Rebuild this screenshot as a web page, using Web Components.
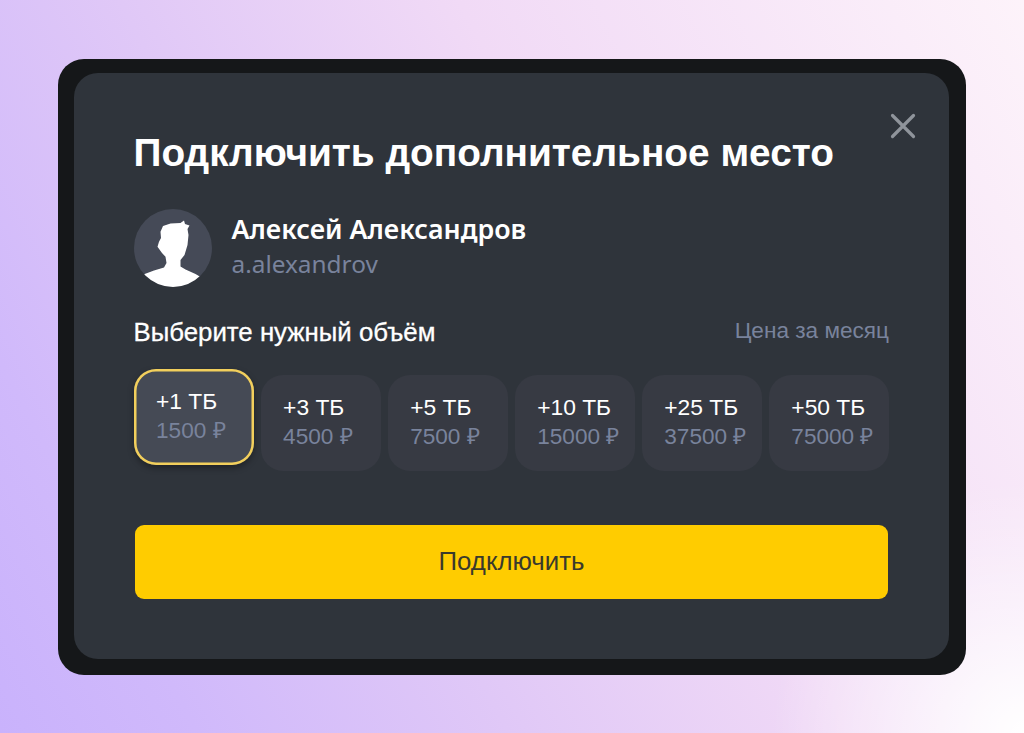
<!DOCTYPE html>
<html lang="ru">
<head>
<meta charset="utf-8">
<title>Подключить дополнительное место</title>
<style>
    html, body { height: 100%; margin: 0; }
    body {
        display: flex;
        align-items: center;
        justify-content: center;
        font-family: "Liberation Sans", Arial, sans-serif;
        background:
            radial-gradient(circle at 100% 100%, #fff 0, rgba(255,255,255,0) 20%),
            linear-gradient(62deg, #c9b2fc 0%, #d0b9fb 14%, #e0c8f7 36%, #f1daf6 60%, #fdf3fa 100%);
    }
</style>
</head>
<body>
<storage-dialog>
    <user-card slot="user" name="Алексей Александров" login="a.alexandrov"></user-card>
    <volume-tile label="+1 ТБ" price="1500 ₽" selected></volume-tile>
    <volume-tile label="+3 ТБ" price="4500 ₽"></volume-tile>
    <volume-tile label="+5 ТБ" price="7500 ₽"></volume-tile>
    <volume-tile label="+10 ТБ" price="15000 ₽"></volume-tile>
    <volume-tile label="+25 ТБ" price="37500 ₽"></volume-tile>
    <volume-tile label="+50 ТБ" price="75000 ₽"></volume-tile>
</storage-dialog>

<script>
    class StorageDialog extends HTMLElement {
        constructor() {
            super();
            this.attachShadow({ mode: 'open' });
            this.shadowRoot.innerHTML = `
                <style>
                    :host {
                        display: block;
                        width: 908px;
                        height: 616px;
                        box-sizing: border-box;
                        padding: 14px 17px 16px 16px;
                        background: #151719;
                        border-radius: 26px;
                    }
                    .panel {
                        position: relative;
                        box-sizing: border-box;
                        height: 100%;
                        padding: 58px 60px 0 60px;
                        background: #2f343b;
                        border-radius: 24px;
                        color: #fff;
                    }
                    h1 {
                        margin: 0 0 34px -0.5px;
                        font-size: 38.8px;
                        line-height: 44px;
                        font-weight: 700;
                        white-space: nowrap;
                    }
                    .close {
                        position: absolute;
                        top: 40px;
                        right: 33px;
                        width: 26px;
                        height: 26px;
                        display: block;
                    }
                    .head {
                        display: flex;
                        justify-content: space-between;
                        align-items: baseline;
                        margin-top: 31px;
                        height: 36px;
                    }
                    .head b {
                        font-weight: 400;
                        font-size: 25.8px;
                        margin-left: -0.5px;
                        -webkit-text-stroke: 0.3px #fff;
                    }
                    .head span {
                        font-size: 22.6px;
                        color: #79839c;
                        position: relative;
                        top: -3px;
                    }
                    .tiles {
                        display: grid;
                        grid-template-columns: repeat(6, 1fr);
                        gap: 7.4px;
                        margin-top: 21px;
                    }
                    .connect {
                        display: block;
                        box-sizing: border-box;
                        width: 753px;
                        height: 74px;
                        margin: 54px 0 0 1px;
                        border: none;
                        border-radius: 9px;
                        background: #ffcc00;
                        color: #3a3a2c;
                        font: 400 25.8px "Liberation Sans", Arial, sans-serif;
                    }
                </style>
                <div class="panel">
                    <svg class="close" viewBox="0 0 26 26" aria-hidden="true">
                        <path d="M2.5 2.5 23.5 23.5M23.5 2.5 2.5 23.5" stroke="#8f949b" stroke-width="3.2" stroke-linecap="round" fill="none"/>
                    </svg>
                    <h1>Подключить дополнительное место</h1>
                    <slot name="user"></slot>
                    <div class="head"><b>Выберите нужный объём</b><span>Цена за месяц</span></div>
                    <div class="tiles"><slot></slot></div>
                    <button class="connect" type="button">Подключить</button>
                </div>
            `;
        }
    }

    class UserCard extends HTMLElement {
        constructor() {
            super();
            this.attachShadow({ mode: 'open' });
        }

        connectedCallback() {
            this.shadowRoot.innerHTML = `
                <style>
                    :host {
                        display: flex;
                        align-items: center;
                        gap: 20px;
                        margin-left: -0.5px;
                    }
                    svg {
                        width: 78px;
                        height: 78px;
                        flex: none;
                        display: block;
                    }
                    .name {
                        font: 600 26.8px/36px "Noto Sans", sans-serif;
                        color: #fff;
                        white-space: nowrap;
                        margin-top: -4px;
                    }
                    .login {
                        font: 400 24.4px/34px "Noto Sans", sans-serif;
                        color: #79839c;
                    }
                </style>
                <svg viewBox="0 0 78 78" aria-hidden="true">
                    <defs>
                        <clipPath id="round"><circle cx="39" cy="39" r="39"/></clipPath>
                        <filter id="soft"><feGaussianBlur stdDeviation="0.7"/></filter>
                    </defs>
                    <circle cx="39" cy="39" r="39" fill="#454a57"/>
                    <g clip-path="url(#round)">
                        <path filter="url(#soft)" fill="#fff" d="M29 17 36.5 14.5 46.5 14 50 11.5 51 15 55.5 16.5 53.5 20 54.5 26 53.5 36 50.5 46 46.5 51 46.5 57.5 51.5 60.5 61.5 65 70 70 70 82 6 82 8 66 20 61.5 30 58.5 32.5 54 31.5 47.7 28 44 23.5 37.7 25 32.7 27 29 26.5 22.7Z"/>
                    </g>
                </svg>
                <div>
                    <div class="name">${this.getAttribute('name')}</div>
                    <div class="login">${this.getAttribute('login')}</div>
                </div>
            `;
        }
    }

    class VolumeTile extends HTMLElement {
        constructor() {
            super();
            this.attachShadow({ mode: 'open' });
        }

        connectedCallback() {
            this.shadowRoot.innerHTML = `
                <style>
                    :host {
                        display: block;
                        box-sizing: border-box;
                        height: 96px;
                        padding: 18px 0 0 22px;
                        background: #373a43;
                        border-radius: 22px;
                    }
                    :host([selected]) {
                        background: #454a55;
                        box-shadow: inset 0 0 0 2.5px #f2cf5c, 0 3px 6px rgba(0, 0, 0, .35);
                        transform: translateY(-6px);
                    }
                    .label {
                        font-size: 22.8px;
                        line-height: 28px;
                        color: #fff;
                        white-space: nowrap;
                    }
                    .price {
                        font-size: 22.6px;
                        line-height: 31px;
                        color: #79839c;
                        white-space: nowrap;
                    }
                </style>
                <div class="label">${this.getAttribute('label')}</div>
                <div class="price">${this.getAttribute('price')}</div>
            `;
        }
    }

    customElements.define('storage-dialog', StorageDialog);
    customElements.define('user-card', UserCard);
    customElements.define('volume-tile', VolumeTile);
</script>
</body>
</html>
